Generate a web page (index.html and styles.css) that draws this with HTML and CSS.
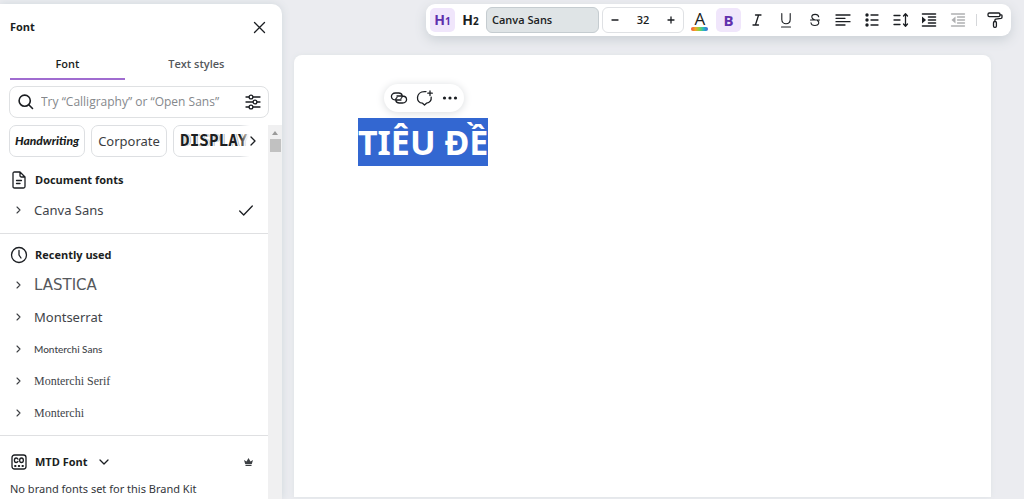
FILE: index.html
```
<!DOCTYPE html>
<html lang="en">
<head>
<meta charset="utf-8">
<title>Font</title>
<link rel="stylesheet" href="styles.css">
</head>
<body>
<div class="app">
  <aside class="panel">
    <header class="panel-head">
      <h2 class="panel-title">Font</h2>
      <button class="plain" aria-label="Close"><svg width="13" height="13" viewBox="0 0 13 13"><path d="M1.500 1.500l10 10M11.500 1.500l-10 10"/></svg></button>
    </header>
    <div class="tabs" role="tablist">
      <button class="tab tab-active" role="tab" aria-selected="true">Font</button>
      <button class="tab" role="tab" aria-selected="false">Text styles</button>
    </div>
    <div class="search">
      <svg class="bold" width="16" height="16" viewBox="0 0 16 16"><circle cx="6.700" cy="6.700" r="5.600"/><path d="M10.800 10.800L14.500 14.500"/></svg>
      <input class="search-input" type="text" aria-label="Search fonts" placeholder="Try “Calligraphy” or “Open Sans”">
      <button class="plain" aria-label="Filters"><svg width="16" height="16" viewBox="0 0 16 16"><path d="M1 3h3M8 3h7M1 8h7M12 8h3M1 13h3M8 13h7"/><circle cx="6" cy="3" r="1.900"/><circle cx="10" cy="8" r="1.900"/><circle cx="6" cy="13" r="1.900"/></svg></button>
    </div>
    <div class="list-area">
      <div class="list">
        <div class="chips">
          <button class="chip chip-hand">Handwriting</button>
          <button class="chip chip-corp">Corporate</button>
          <button class="chip chip-display">DISPLAY</button>
          <button class="chips-next" aria-label="More categories"><svg width="6" height="10" viewBox="0 0 6 10"><path d="M1 1l4 4-4 4"/></svg></button>
        </div>
        <section class="group">
          <h3 class="group-head"><svg class="head-icon" width="18" height="18" viewBox="0 0 18 18"><path d="M3 2.500Q3 1 4.500 1H10l5 5v9.500q0 1.500-1.500 1.500h-9Q3 17 3 15.500zM10 1v3.500Q10 6 11.500 6H15M6.500 9.500h5M6.500 12.500h3.500"/></svg>Document fonts</h3>
          <button class="font-row f-canva"><svg class="chev" width="5" height="8" viewBox="0 0 5 8"><path d="M1 1l3 3-3 3"/></svg><span>Canva Sans</span><svg class="check" width="14" height="11" viewBox="0 0 14 11"><path d="M.7 6l4 4L13.300 1"/></svg></button>
        </section>
        <section class="group">
          <h3 class="group-head"><svg class="head-icon" width="18" height="18" viewBox="0 0 18 18"><circle cx="9" cy="9" r="7.500"/><path d="M9 4.500V9l2 3"/></svg>Recently used</h3>
          <button class="font-row f-lastica"><svg class="chev" width="5" height="8" viewBox="0 0 5 8"><path d="M1 1l3 3-3 3"/></svg><span>LASTICA</span></button>
          <button class="font-row f-mont"><svg class="chev" width="5" height="8" viewBox="0 0 5 8"><path d="M1 1l3 3-3 3"/></svg><span>Montserrat</span></button>
          <button class="font-row f-msans"><svg class="chev" width="5" height="8" viewBox="0 0 5 8"><path d="M1 1l3 3-3 3"/></svg><span>Monterchi Sans</span></button>
          <button class="font-row f-mserif"><svg class="chev" width="5" height="8" viewBox="0 0 5 8"><path d="M1 1l3 3-3 3"/></svg><span>Monterchi Serif</span></button>
          <button class="font-row f-mon"><svg class="chev" width="5" height="8" viewBox="0 0 5 8"><path d="M1 1l3 3-3 3"/></svg><span>Monterchi</span></button>
        </section>
        <section class="group brand">
          <h3 class="group-head"><svg class="head-icon" width="18" height="18" viewBox="0 0 18 18"><rect x="2" y="2" width="14" height="14" rx="2.500"/><path d="M8 6.200Q7.500 5 6.200 5C3.800 5 3.800 9.500 6.200 9.500Q7.500 9.500 8 8.300M11.500 5c-2.500 0-2.500 4.500 0 4.500s2.500-4.500 0-4.500z"/><path d="M5 13h.6M8.700 13h.6M12.400 13h.6" stroke-width="1.800"/></svg>MTD Font
            <button class="plain" aria-label="Choose brand kit"><svg width="10" height="6" viewBox="0 0 10 6"><path d="M1 1l4 4 4-4"/></svg></button>
            <svg class="crown" width="9" height="8" viewBox="0 0 9 8"><path d="M0 2l2.500 1.500L4.500 0l2 3.500L9 2 7.800 6H1.200zM1.500 6.700h6V8h-6z"/></svg>
          </h3>
          <p class="note">No brand fonts set for this Brand Kit</p>
        </section>
      </div>
      <div class="scrollbar" aria-hidden="true"><svg class="arrow" width="6" height="4" viewBox="0 0 6 4"><path d="M0 4l3-4 3 4z"/></svg><div class="thumb"></div></div>
    </div>
  </aside>
  <main class="work">
    <div class="toolbar" role="toolbar" aria-label="Text formatting">
      <button class="tool heading on">H<small>1</small></button>
      <button class="tool heading">H<small>2</small></button>
      <button class="font-pick">Canva Sans</button>
      <div class="stepper">
        <button class="step" aria-label="Decrease size"><svg width="8" height="8" viewBox="0 0 8 8"><path d="M1 4h6"/></svg></button>
        <input class="size" type="text" aria-label="Font size" value="32">
        <button class="step" aria-label="Increase size"><svg width="8" height="8" viewBox="0 0 8 8"><path d="M1 4h6M4 1v6"/></svg></button>
      </div>
      <div class="tools">
        <button class="tool color" aria-label="Text color"><span>A</span><i class="rainbow"></i></button>
        <button class="tool bold-btn on">B</button>
        <button class="tool" aria-label="Italic"><svg width="16" height="16" viewBox="0 0 16 16"><path d="M6.500 3H12M4 13h5.500M9.600 3l-3.200 10"/></svg></button>
        <button class="tool" aria-label="Underline"><svg width="16" height="16" viewBox="0 0 16 16"><path class="thin" d="M3.800 1.500V7.500c0 5.600 8.400 5.600 8.400 0V1.500M3.500 15h9"/></svg></button>
        <button class="tool" aria-label="Strikethrough"><svg width="16" height="16" viewBox="0 0 16 16"><path class="thin" d="M11.700 4.800C11.200 1.500 4.800 1.500 4.800 5c0 2 2 2.500 3.200 3M3.500 8h9M10.500 8.500c2.500 2 1.300 5-2.500 5-2.500 0-3.800-1-4-2.700"/></svg></button>
        <button class="tool" aria-label="Align"><svg width="16" height="16" viewBox="0 0 16 16"><path d="M1 3h14M1 6.300h9M1 9.700h14M1 13h9"/></svg></button>
        <button class="tool" aria-label="List"><svg width="16" height="16" viewBox="0 0 16 16"><path d="M7 3h7M7 8h7M7 13h7"/><g class="fill"><circle cx="3" cy="3" r="1.700"/><circle cx="3" cy="8" r="1.700"/><circle cx="3" cy="13" r="1.700"/></g></svg></button>
        <button class="tool" aria-label="Spacing"><svg width="16" height="16" viewBox="0 0 16 16"><path d="M1 3.500h6M1 8h6M1 12.500h6M12.500 2v12M10.500 4l2-2.300L14.500 4M10.500 12l2 2.300 2-2.300"/></svg></button>
        <button class="tool" aria-label="Increase indent"><svg width="16" height="16" viewBox="0 0 16 16"><path class="heavy" d="M1.500 2h13M7.500 5h7M7.500 8h7M7.500 11h7M1.500 14h13"/><path class="fill" d="M1 4.500L5 8l-4 3.500z"/></svg></button>
        <button class="tool faded" aria-label="Decrease indent"><svg width="16" height="16" viewBox="0 0 16 16"><path d="M1.500 2h13M7.500 5h7M7.500 8h7M7.500 11h7M1.500 14h13"/><path class="fill" d="M5.500 4.500L1.500 8l4 3.500z"/></svg></button>
      </div>
      <i class="divider"></i>
      <button class="tool" aria-label="Copy style"><svg width="16" height="16" viewBox="0 0 16 16"><rect x="1" y="1" width="12" height="3.600" rx="1.300"/><path d="M13 2.800h1.200q.8 0 .8.800v1.600q0 1-1 1.200L8.800 7.200q-.9.200-.9 1V9.500"/><rect x="6.500" y="9.500" width="2.900" height="5.800" rx="1.200"/></svg></button>
    </div>
    <article class="page">
      <div class="floating">
        <button class="plain" aria-label="Link"><svg width="18" height="14" viewBox="0 0 18 14"><path d="M11 9H6C0 9 0 2 5.500 2h3.300c3.700 0 4.500 4 2.200 5.500M7 5h5c6 0 6 7 .5 7H9.200C5.500 12 4.700 8 7 6.500"/></svg></button>
        <button class="plain" aria-label="Comment"><svg width="18" height="16" viewBox="0 0 18 16"><path d="M10 1.600H8.500C-.5 1.600-.5 13 6.500 13.200L8.500 15l2-1.800c3.500-.3 5-3 4.700-6M14 1v4.500M11.800 3.200h4.500"/></svg></button>
        <button class="plain" aria-label="More"><svg width="16" height="4" viewBox="0 0 16 4"><g class="fill"><circle cx="2.500" cy="2" r="1.600"/><circle cx="8" cy="2" r="1.600"/><circle cx="13.500" cy="2" r="1.600"/></g></svg></button>
      </div>
      <h1 class="title"><span class="selected">TIÊU ĐỀ</span></h1>
    </article>
  </main>
</div>
</body>
</html>
```
FILE: styles.css
```
* { box-sizing: border-box; }
body {
  margin: 0;
  background: #ebecf0;
  color: #1b1e22;
  font: 12px/18px "Open Sans", "Noto Sans", sans-serif;
}
button, input {
  margin: 0;
  padding: 0;
  border: 0;
  background: none;
  color: inherit;
  font: inherit;
}
h1, h2, h3, p { margin: 0; }
svg {
  display: block;
  flex: none;
  fill: none;
  stroke: #1b1e22;
  stroke-width: 1.3;
  stroke-linecap: round;
  stroke-linejoin: round;
}
.bold { stroke-width: 1.6; }
.thin { stroke-width: 1.1; }
.heavy { stroke-width: 1.6; }
.fill { fill: #1b1e22; stroke: none; }
.plain { display: flex; }
.app { display: flex; height: 100vh; overflow: hidden; }

.panel {
  display: flex;
  flex-direction: column;
  flex: none;
  width: 282px;
  margin-top: 4px;
  border-radius: 0 10px 0 0;
  background: #fff;
  box-shadow: 0 0 8px #cfd7db;
}
.panel-head {
  display: flex;
  align-items: center;
  justify-content: space-between;
  padding: 14px 16px 18px 10px;
}
.panel-title { font-size: 11px; line-height: 18px; font-weight: 700; }
.tabs { display: flex; padding: 0 14px 0 10px; }
.tab {
  flex: 4;
  height: 26px;
  padding-bottom: 4px;
  border-bottom: 2px solid transparent;
  color: #54585c;
  font-size: 11px;
  font-weight: 600;
}
.tab:last-child { flex: 5; }
.tab-active { border-color: #a06cd0; color: #1b1e22; }
.search {
  display: flex;
  align-items: center;
  gap: 7px;
  height: 32px;
  margin: 6px 13px 7px 9px;
  padding: 0 7px 0 8px;
  border: 1px solid #dfe1e3;
  border-radius: 8px;
}
.search-input { flex: 1; min-width: 0; outline: 0; }
.search-input::placeholder { color: #85888c; opacity: 1; }
.list-area { display: flex; flex: 1; min-height: 0; }
.list { flex: 1; min-width: 0; overflow: hidden; }
.scrollbar {
  display: flex;
  flex-direction: column;
  align-items: center;
  gap: 4px;
  width: 14px;
  padding-top: 6px;
  background: #f0f0f1;
}
.arrow { fill: #9a9a9a; stroke: none; }
.thumb { width: 11px; height: 13px; background: #c1c1c1; }
.chips {
  position: relative;
  display: flex;
  gap: 6px;
  height: 32px;
  margin-right: 12px;
  padding-left: 9px;
  overflow: hidden;
}
.chip {
  flex: none;
  width: 76px;
  border: 1px solid #dddfe2;
  border-radius: 7px;
  white-space: nowrap;
}
.chip-hand { font: italic 900 12px/18px Lato, sans-serif; }
.chip-corp { font: 13px/20px "Noto Sans", sans-serif; color: #3b3e42; }
.chip-display {
  width: 88px;
  padding-left: 6px;
  font: bold 16px/20px "DejaVu Sans Mono", monospace;
  text-align: left;
  text-shadow: 1px 0 #fff, 2px 0 #b9bbbd;
}
.chips-next {
  position: absolute;
  right: 0;
  top: 0;
  display: flex;
  align-items: center;
  justify-content: flex-end;
  width: 16px;
  height: 32px;
  background: linear-gradient(to right, transparent, #fff 60%);
}
.group { padding-top: 5px; padding-bottom: 6px; border-bottom: 1px solid #dfe0e2; }
.chips + .group { padding-top: 7px; padding-bottom: 7px; }
.brand { padding-top: 10px; border: 0; }
.group-head {
  display: flex;
  align-items: center;
  gap: 7px;
  height: 30px;
  padding: 1px 15px 0 10px;
  font-size: 11px;
  font-weight: 700;
}
.group-head .plain { margin-left: 4px; }
.crown { margin-left: auto; fill: #3c3f43; stroke: none; }
.font-row {
  display: flex;
  align-items: center;
  gap: 13px;
  width: 100%;
  height: 32px;
  padding: 0 15px 0 16px;
  color: #414449;
  text-align: left;
}
.chev { stroke: #3c3f43; stroke-width: 1.1; }
.check { margin-left: auto; }
.f-canva { font: 13px/20px "Noto Sans", sans-serif; }
.f-lastica { font: 15px/20px "DejaVu Sans", sans-serif; color: #55585c; }
.f-mont { font: 13px/20px "Noto Sans", sans-serif; }
.f-msans { font: 500 10px/18px Lato, sans-serif; }
.f-mserif, .f-mon { font: 12px/18px "Liberation Serif", serif; }
.note {
  padding: 4px 10px 0;
  font: 11px/18px "Noto Sans", sans-serif;
  white-space: nowrap;
  color: #33363a;
}

.work { display: flex; flex-direction: column; flex: 1; min-width: 0; }
.toolbar {
  display: flex;
  align-items: center;
  gap: 3px;
  height: 32px;
  margin: 4px 13px 19px 144px;
  padding: 0 4px;
  border-radius: 9px;
  background: #fff;
  box-shadow: 0 4px 12px #cbd1d6;
}
.tool {
  display: flex;
  align-items: center;
  justify-content: center;
  flex: none;
  width: 25px;
  height: 24px;
  border-radius: 5px;
}
.on { background: #f0e6fb; color: #6030ad; }
.heading { font-size: 14px; font-weight: 700; align-items: baseline; line-height: 24px; }
.heading small { font-size: 10px; }
.font-pick {
  width: 113px;
  height: 26px;
  padding-left: 5px;
  border: 1px solid #c5ccd0;
  border-radius: 6px;
  background: #dfe4e6;
  font-size: 11px;
  font-weight: 600;
  text-align: left;
}
.stepper {
  display: flex;
  width: 82px;
  height: 26px;
  border: 1px solid #dfe1e4;
  border-radius: 6px;
}
.step { display: flex; align-items: center; justify-content: center; width: 24px; }
.size { flex: 1; min-width: 0; text-align: center; font-size: 11px; font-weight: 600; }
.tools { display: flex; flex: 1; gap: 3px; }
.tools .tool { flex: 1; width: auto; }
.color { flex-direction: column; font-size: 17px; font-weight: 500; line-height: 17px; }
.rainbow {
  width: 17px;
  height: 4px;
  border-radius: 2px;
  background: linear-gradient(to right, #f0503c, #f5a623, #7ed348, #23b7c8, #3f62d8);
}
.bold-btn { font-size: 15px; font-weight: 700; }
.faded { opacity: 0.35; }
.divider { width: 1px; height: 12px; margin: 0 2px; background: #d5d7da; }
.page {
  flex: 1;
  margin: 0 33px 2px 12px;
  padding: 29px 64px;
  border-radius: 8px 8px 0 0;
  background: #fff;
  box-shadow: 0 0 5px #dfe3e6;
}
.floating {
  display: flex;
  align-items: center;
  justify-content: center;
  gap: 8px;
  width: 80px;
  height: 28px;
  margin: 0 0 6px 26px;
  border-radius: 14px;
  background: #fff;
  box-shadow: 0 1px 8px #d9dbdd;
}
.title { display: flex; font: bold 34px/48px "Noto Sans", sans-serif; }
.selected { background: #3367d1; color: #fff; white-space: nowrap; }
```
